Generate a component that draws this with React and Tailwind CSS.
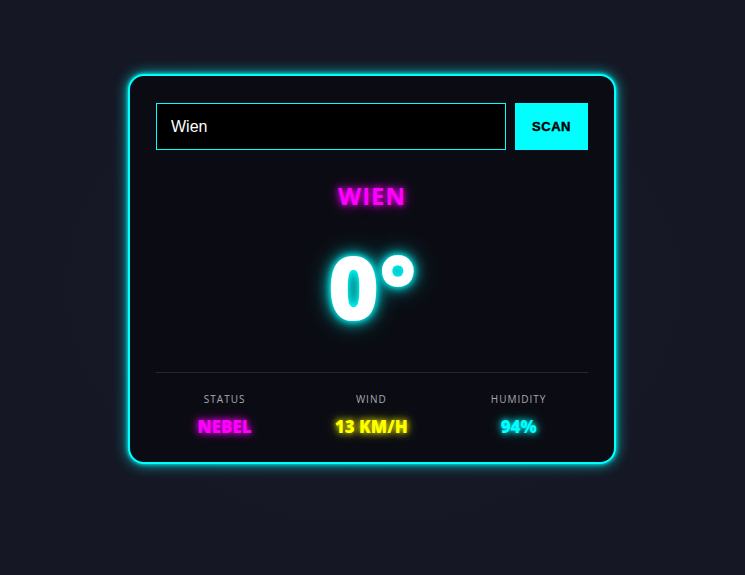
import { useState } from "react";

const stats = [
  { label: "STATUS", value: "NEBEL", tone: "text-[#ff00ff] [text-shadow:0_0_6px_#ff00ff,0_0_12px_rgba(255,0,255,0.6)]" },
  { label: "WIND", value: "13 KM/H", tone: "text-[#ffff00] [text-shadow:0_0_6px_#ffff00,0_0_12px_rgba(255,255,0,0.5)]" },
  { label: "HUMIDITY", value: "94%", tone: "text-[#00ffff] [text-shadow:0_0_6px_#00ffff,0_0_12px_rgba(0,255,255,0.5)]" },
];

export default function App() {
  const [city, setCity] = useState("Wien");

  return (
    <div className="min-h-[575px] w-full bg-[#161827] bg-[radial-gradient(ellipse_at_center,#181a2b_0%,#151724_70%)] flex justify-center pt-[74px] font-['Open_Sans',sans-serif]">
      <div className="w-[488px] h-[390px] mr-px rounded-2xl border-2 border-[#00ffff] bg-[#0b0c13] shadow-[0_0_14px_rgba(0,255,255,0.75),0_0_4px_#00ffff] px-[26px] pt-[27px]">
        {/* Suche */}
        <div className="flex gap-[9px] h-[47px]">
          <input
            value={city}
            onChange={(e) => setCity(e.target.value)}
            className="flex-1 bg-black border border-[#00ffff] text-white px-[14px] text-[16px] font-['Liberation_Sans',Arial,sans-serif] outline-none"
          />
          <button className="w-[73px] bg-[#00ffff] text-black text-[13px] font-bold tracking-[0.5px] font-['Liberation_Sans',Arial,sans-serif] [-webkit-text-stroke:0.4px_black]">
            SCAN
          </button>
        </div>

        {/* Stadt + Temperatur */}
        <h2 className="mt-[28px] text-center text-[24px] leading-[36px] font-bold tracking-[1px] text-[#ff00ff] [text-shadow:0_0_6px_#ff00ff,0_0_14px_rgba(255,0,255,0.6)]">
          WIEN
        </h2>
        <div className="mt-[12px] text-center text-[88px] leading-[120px] font-extrabold text-white [text-shadow:0_0_6px_#00ffff,0_0_14px_#00ffff,0_0_24px_rgba(0,255,255,0.5)]">
          0°
        </div>

        <div className="mt-[26px] border-t border-[#26272e]" />

        {/* Details */}
        <div className="flex justify-around pt-[20px]">
          {stats.map((s) => (
            <div key={s.label} className="flex flex-col items-center">
              <span className="text-[10px] leading-[12px] tracking-[1px] text-[#a8a8b0]">{s.label}</span>
              <span className={`mt-[11px] text-[17px] leading-[22px] font-extrabold ${s.tone}`}>{s.value}</span>
            </div>
          ))}
        </div>
      </div>
    </div>
  );
}
